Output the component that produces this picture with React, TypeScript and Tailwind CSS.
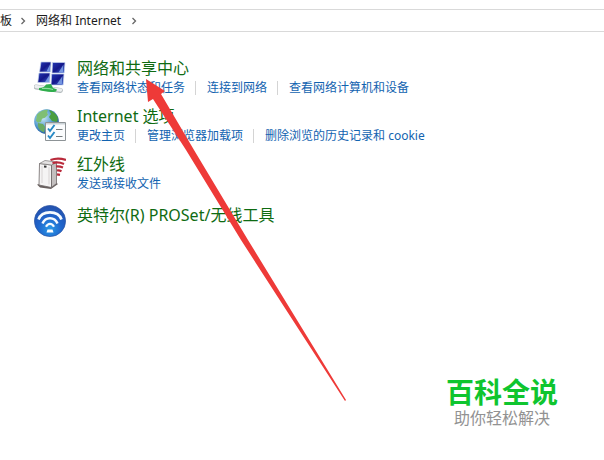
import type { ReactNode } from "react";

function NetworkIcon() {
  return (
    <svg viewBox="0 0 32 32" className="size-8" aria-hidden="true">
      <defs>
        <linearGradient id="screen" x1="0" y1="0" x2="1" y2="1">
          <stop offset="0" stopColor="#2338b4" />
          <stop offset="0.5" stopColor="#14188a" />
          <stop offset="1" stopColor="#3f67d6" />
        </linearGradient>
      </defs>
      <g fill="url(#screen)" stroke="#c3d2ec" strokeWidth="0.7">
        <path d="M7 1h10l-.7 10H5.500z" />
        <path d="M18.500 1.500H31l-.9 10.500H18z" />
        <path d="M5 12h11l-.5 9.500H3.800z" />
        <path d="M17.700 13h12.300l-.9 11H17z" />
      </g>
      <g fill="#8fb4f2" opacity="0.75">
        <path d="M12.500 10.500l3.500-7-.4 7z" />
        <path d="M24.500 11.500l5-8-.6 8z" />
        <path d="M11 21l4.500-7-.4 7z" />
        <path d="M23 23l5.500-8-.6 8z" />
      </g>
      <path d="M2 26l24.500 3.500" stroke="#b4bbbe" strokeWidth="4.800" strokeLinecap="round" />
      <path d="M2 25.600l24.500 3.500" stroke="#eceff0" strokeWidth="3.200" strokeLinecap="round" />
      <path d="M5 27c3 0 6-1 7-3.500l5-.5 2 4 4 1.500-1 2c-6 1.500-12-.5-17-1.500z" fill="#2fae4c" />
      <path d="M8 27.500c4 0 6-.5 11 1" stroke="#90dda0" strokeWidth="1.200" fill="none" />
    </svg>
  );
}

function InternetIcon() {
  return (
    <svg viewBox="0 0 32 32" className="size-8" aria-hidden="true">
      <defs>
        <radialGradient id="ocean" cx="0.35" cy="0.35" r="0.7">
          <stop offset="0" stopColor="#cdeaf7" />
          <stop offset="0.55" stopColor="#5a9fd2" />
          <stop offset="1" stopColor="#1c5299" />
        </radialGradient>
      </defs>
      <circle cx="12.500" cy="12.500" r="12.300" fill="url(#ocean)" />
      <path d="M3 5.500c3-3.500 7-5 11-4.800l-1 3 1 2-3 3-3 1-1 3-3 1-2-2z" fill="#7fbf74" />
      <path d="M15 1c4 1 7.500 4 9 8l-1 4-5-1-3-4 2-3z" fill="#4b9f3f" />
      <path d="M4 14l5 1 2 3-1 5.500c-4-1.500-7-5-6-9.500z" fill="#69ab62" />
      <path d="M11.500 13.500h20v18h-20z" fill="#fbfcfd" stroke="#8d9396" />
      <path d="M12 14h19v1.500H12z" fill="#cbd2d6" />
      <path d="M14 19.500l2 2.500 4.500-6M14 26.500l2 2.500 4.500-6" fill="none" stroke="#2688c4" strokeWidth="1.900" />
      <path d="M22 20.500h6.500M22 27.500h6.500" stroke="#747a7d" strokeWidth="1.200" />
    </svg>
  );
}

function InfraredIcon() {
  return (
    <svg viewBox="0 0 32 32" className="size-8" aria-hidden="true">
      <path d="M3 27.500l3 3 11 1.500 7-5-3-2z" fill="#69605f" />
      <path d="M5.500 6.500L17.500 8v22.500L5 28z" fill="#f5f4f4" stroke="#6d6767" strokeWidth="0.8" />
      <path d="M17.500 8l5-3v21.500l-5 4z" fill="#c3bfbf" stroke="#6d6767" strokeWidth="0.8" />
      <path d="M5.500 6.500l5.500-3 11.500 1.500-5 3z" fill="#e4e2e2" stroke="#787575" strokeWidth="0.7" />
      <path d="M8 9v17M15 10v17.500" stroke="#d0cdcd" strokeWidth="0.8" />
      <path d="M10 9.500l2.500.3" stroke="#333" strokeWidth="2" />
      <g fill="none" stroke="#b92a3b" strokeWidth="2.200">
        <path d="M16.500 3c5-2 10-2 15.500 0" />
        <path d="M18.500 6c4-1 8-.5 11.500 1" />
        <path d="M22 9.500c3-.3 4.500 0 7 1" />
        <path d="M23 13.500c2-.3 3 0 4.500.7" />
        <path d="M23 17.300l3 .5" />
      </g>
    </svg>
  );
}

function WirelessIcon() {
  return (
    <svg viewBox="0 0 32 32" className="size-8" aria-hidden="true">
      <defs>
        <radialGradient id="disc" cx="0.5" cy="0.75" r="0.75">
          <stop offset="0" stopColor="#2a9ae8" />
          <stop offset="0.5" stopColor="#1f65cc" />
          <stop offset="1" stopColor="#2450ac" />
        </radialGradient>
      </defs>
      <circle cx="16" cy="16" r="15.600" fill="url(#disc)" stroke="#2c56a5" strokeWidth="0.700" />
      <g fill="none" stroke="#f6fbff">
        <path d="M4.500 14.500C8 5 24 5 27.500 14.500" strokeWidth="2.700" />
        <path d="M8.500 18.500c3-7 12-7 15 0" strokeWidth="2.500" />
        <path d="M12 21.800c2-4 6-4 8 0" strokeWidth="2.200" />
      </g>
      <path d="M13.500 24.500h5l1 3h-7z" fill="#fff" />
    </svg>
  );
}

function Chevron() {
  return (
    <svg viewBox="0 0 6 8" className="h-2 w-1.5" aria-hidden="true">
      <path d="M1.500 1l3 3-3 3" fill="none" stroke="#666" strokeWidth="1.300" />
    </svg>
  );
}

type CategoryProps = { icon: ReactNode; title: string; links?: string[] };

function Category({ icon, title, links }: CategoryProps) {
  return (
    <section className="flex h-10 gap-[11px]">
      <div className="shrink-0 pt-[3px]">{icon}</div>
      <div className="whitespace-nowrap">
        <h2 className={links ? "text-base leading-5" : "text-base leading-[26px]"}>
          <a href="#" className="text-[#0f6b12]">{title}</a>
        </h2>
        {links && (
          <ul className="flex items-center text-xs leading-5">
            {links.map((link, index) => (
              <li key={link} className="flex items-center">
                {index > 0 && <span className="mr-[11px] ml-2.5 h-3.5 w-px bg-[#d4d4d4]" />}
                <a href="#" className="text-[#1263b0]">{link}</a>
              </li>
            ))}
          </ul>
        )}
      </div>
    </section>
  );
}

export default function App() {
  return (
    <div className="relative flex min-h-screen flex-col overflow-hidden bg-white pt-[9px] font-['Noto_Sans','Noto_Sans_CJK_SC',sans-serif]">
      <nav aria-label="位置" className="flex h-[23px] items-center border-y border-[#d9d9d9] text-xs text-[#1c1c1c]">
        <a href="#">板</a>
        <span className="mr-2.5 ml-2"><Chevron /></span>
        <a href="#">网络和 Internet</a>
        <span className="ml-2.5"><Chevron /></span>
      </nav>

      <main className="flex flex-col gap-2 pt-[26px] pl-[34px]">
        <Category icon={<NetworkIcon />} title="网络和共享中心" links={["查看网络状态和任务", "连接到网络", "查看网络计算机和设备"]} />
        <Category icon={<InternetIcon />} title="Internet 选项" links={["更改主页", "管理浏览器加载项", "删除浏览的历史记录和 cookie"]} />
        <Category icon={<InfraredIcon />} title="红外线" links={["发送或接收文件"]} />
        <Category icon={<WirelessIcon />} title="英特尔(R) PROSet/无线工具" />
      </main>

      <footer className="mt-auto mr-[46px] mb-8 self-end text-center">
        <p className="text-[28px] leading-8 font-bold text-[#0fc52f]">百科全说</p>
        <p className="text-base leading-5 text-[#929292]">助你轻松解决</p>
      </footer>

      <svg viewBox="0 0 202 324" className="pointer-events-none absolute top-[78px] left-[145px] h-[324px] w-[202px]" aria-hidden="true">
        <path d="M1 1l19 12-4 3 33 56 54 90 98 160-1 1L96 162 41 72 8 21l-5 3z" fill="#ee3a38" />
      </svg>
    </div>
  );
}
